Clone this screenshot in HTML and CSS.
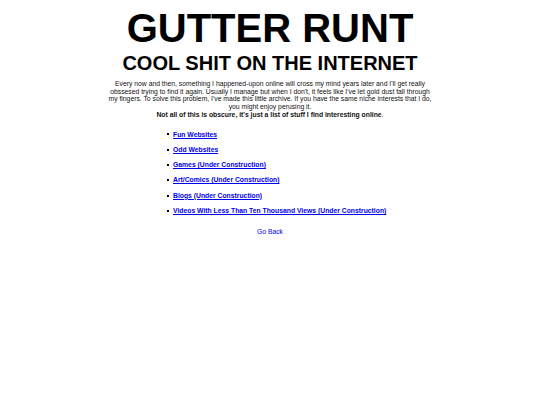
FILE: index.html
```html
<!DOCTYPE html>
<html>
<head>
<meta charset="utf-8">
<link rel="stylesheet" href="styles.css">
</head>
<body>
<div class="page">
  <h1 class="title">GUTTER RUNT</h1>
  <h2 class="subtitle">COOL SHIT ON THE INTERNET</h2>
  <p class="intro">Every now and then, something I happened-upon online will cross my mind years later and I'll get really obssesed trying to find it again. Usually I manage but when I don't, it feels like I've let gold dust fall through my fingers. To solve this problem, I've made this little archive. If you have the same niche interests that I do, you might enjoy perusing it.<br><b>Not all of this is obscure, it's just a list of stuff I find interesting online</b>.</p>
  <ul class="links">
    <li><a href="#">Fun Websites</a></li>
    <li><a href="#">Odd Websites</a></li>
    <li><a href="#">Games (Under Construction)</a></li>
    <li><a href="#">Art/Comics (Under Construction)</a></li>
    <li><a href="#">Blogs (Under Construction)</a></li>
    <li><a href="#">Videos With Less Than Ten Thousand Views (Under Construction)</a></li>
  </ul>
  <p class="back"><a href="#">Go Back</a></p>
</div>
</body>
</html>
```
FILE: styles.css
```css
html, body {
  margin: 0;
  padding: 0;
  background: #fff;
}
body {
  font-family: "Liberation Sans", Arial, sans-serif;
  color: #000;
}
.page {
  width: 324px;
  margin: 0 auto;
  padding-top: 8px;
  text-align: center;
}
.title {
  margin: 0;
  font-size: 40px;
  line-height: 40px;
  font-weight: bold;
}
.subtitle {
  margin: 5px 0 0;
  font-size: 20px;
  line-height: 20px;
  font-weight: bold;
}
.intro {
  margin: 7px 0 0;
  font-size: 6.8px;
  line-height: 7.7px;
  color: #111;
}
.links {
  list-style: none;
  text-align: left;
  margin: 12px 0 0;
  padding-left: 59px;
  font-size: 6.8px;
  line-height: 7.7px;
}
.links li {
  display: flex;
  align-items: center;
  gap: 4px;
  margin-bottom: 7.6px;
}
.links li::before {
  content: "";
  width: 2px;
  height: 2px;
  background: #000;
  flex: none;
}
.links a {
  color: #0000ee;
  font-weight: bold;
}
.back {
  margin: 13px 0 0;
  font-size: 6.8px;
  line-height: 7.7px;
}
.back a {
  color: #0000ee;
}
```
